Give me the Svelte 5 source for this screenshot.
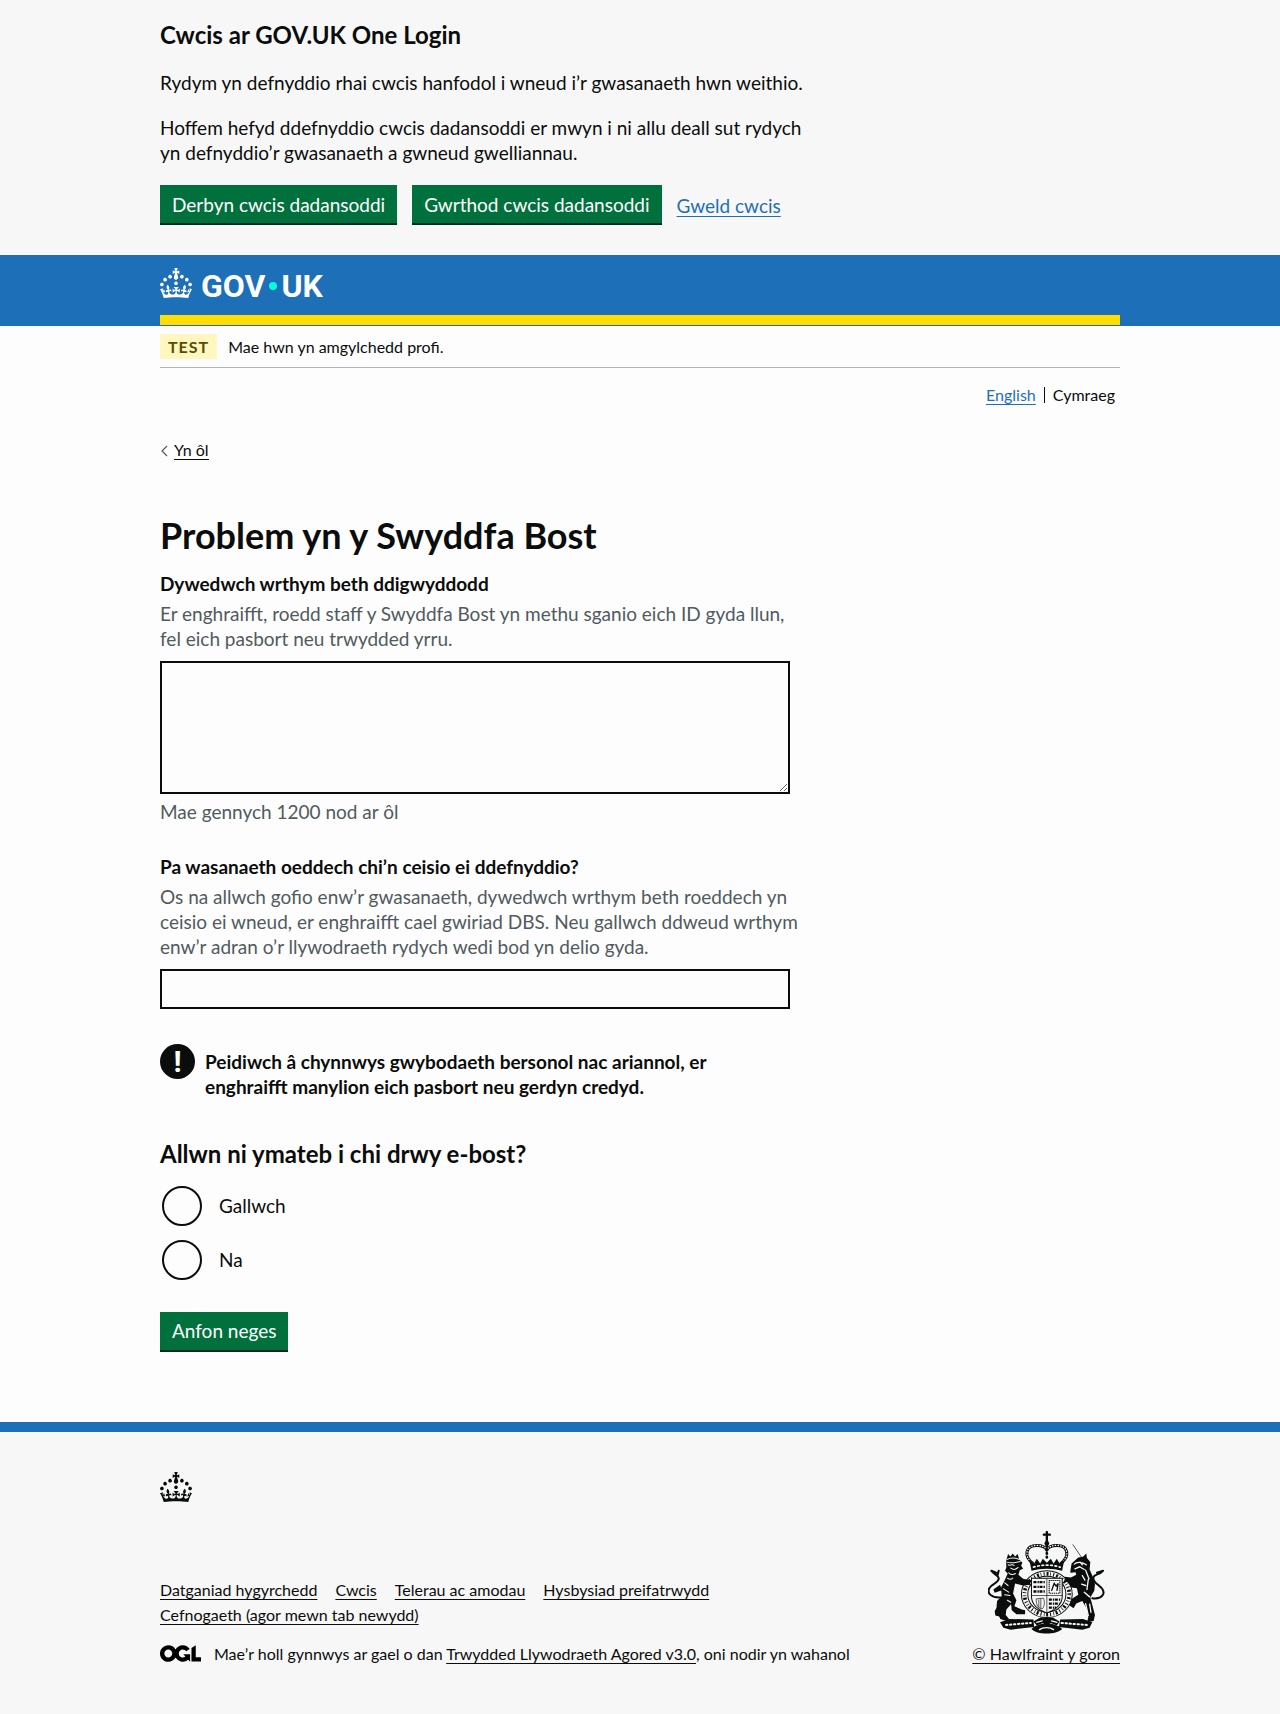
<script>
  const limit = 1200;
  const options = ['Gallwch', 'Na'];
  const footerLinks = [
    'Datganiad hygyrchedd',
    'Cwcis',
    'Telerau ac amodau',
    'Hysbysiad preifatrwydd',
    'Cefnogaeth (agor mewn tab newydd)'
  ];
  let message = $state('');
  let service = $state('');
  let reply = $state('');
  let remaining = $derived(limit - message.length);
</script>

{#snippet crown()}
  <svg class="crown" viewBox="0 0 32 30" aria-hidden="true">
    <path fill="currentColor" d="M22.6 10.4c-1 .4-2-.1-2.4-1-.4-.9.1-2 1-2.4.9-.4 2 .1 2.4 1s-.1 2-1 2.4m-5.9 6.7c-.9.4-2-.1-2.4-1-.4-.9.1-2 1-2.4.9-.4 2 .1 2.4 1s-.1 2-1 2.4m10.8-3.7c-1 .4-2-.1-2.4-1-.4-.9.1-2 1-2.4.9-.4 2 .1 2.4 1s0 2-1 2.4m3.3 4.8c-1 .4-2-.1-2.4-1-.4-.9.1-2 1-2.4.9-.4 2 .1 2.4 1s-.1 2-1 2.4M17 4.7l2.3 1.2V2.5l-2.3.7-.2-.2.9-3h-3.4l.9 3-.2.2c-.1.1-2.3-.7-2.3-.7v3.4L15 4.7c.1.1.1.2.2.2l-1.3 4c-.1.2-.1.4-.1.6 0 1.1.8 2 1.9 2.2h.7c1-.2 1.9-1.1 1.9-2.1 0-.2 0-.4-.1-.6l-1.3-4c-.1-.2 0-.2.1-.3m-7.6 5.7c.9.4 2-.1 2.4-1 .4-.9-.1-2-1-2.4-.9-.4-2 .1-2.4 1s0 2 1 2.4m-5 3c.9.4 2-.1 2.4-1 .4-.9-.1-2-1-2.4-.9-.4-2 .1-2.4 1s.1 2 1 2.4m-3.2 4.8c.9.4 2-.1 2.4-1 .4-.9-.1-2-1-2.4-.9-.4-2 .1-2.4 1s0 2 1 2.4m14.8 11c4.4 0 8.6.3 12.3.8 1.1-4.5 2.4-7 3.7-8.8l-2.5-.9c.2 1.3.3 1.9 0 2.7-.4-.4-.8-1.1-1.1-2.3l-1.2 4c.7-.5 1.3-.8 2-.9-1.1 2.5-2.6 3.1-3.5 3-1.1-.2-1.7-1.2-1.5-2.1.3-1.2 1.5-1.5 2.1-.1 1.1-2.3-.8-3-2-2.3 1.9-1.9 2.1-3.5.6-5.6-2.1 1.6-2.1 3.2-1.2 5.5-1.2-1.4-3.2-.6-2.5 1.6.9-1.4 2.1-.5 1.9.8-.2 1.1-1.7 2.1-3.5 1.9-2.7-.2-2.9-2.1-2.9-3.6.7-.1 1.9.5 2.9 1.9l.4-4.3c-1.1 1.1-2.1 1.4-3.2 1.4.4-1.2 2.1-3 2.1-3h-5.4s1.7 1.9 2.1 3c-1.1 0-2.1-.2-3.2-1.4l.4 4.3c1-1.4 2.2-2 2.9-1.9-.1 1.5-.2 3.4-2.9 3.6-1.9.2-3.4-.8-3.5-1.9-.2-1.3 1-2.2 1.9-.8.7-2.3-1.2-3-2.5-1.6.9-2.2.9-3.9-1.2-5.5-1.5 2-1.3 3.7.6 5.6-1.2-.7-3.1 0-2 2.3.6-1.4 1.8-1.1 2.1.1.2.9-.3 1.9-1.5 2.1-.9.2-2.4-.5-3.5-3 .6 0 1.2.3 2 .9l-1.2-4c-.3 1.1-.7 1.9-1.1 2.3-.3-.8-.2-1.4 0-2.7l-2.9.9C1.3 23 2.6 25.5 3.7 30c3.7-.5 7.9-.8 12.3-.8" />
  </svg>
{/snippet}

<section class="cookies" aria-label="Cwcis ar GOV.UK One Login">
  <div class="container">
    <h2>Cwcis ar GOV.UK One Login</h2>
    <p>Rydym yn defnyddio rhai cwcis hanfodol i wneud i’r gwasanaeth hwn weithio.</p>
    <p>Hoffem hefyd ddefnyddio cwcis dadansoddi er mwyn i ni allu deall sut rydych yn defnyddio’r gwasanaeth a gwneud gwelliannau.</p>
    <div class="actions">
      <button type="button">Derbyn cwcis dadansoddi</button>
      <button type="button">Gwrthod cwcis dadansoddi</button>
      <a class="blue" href="#cwcis">Gweld cwcis</a>
    </div>
  </div>
</section>

<header>
  <div class="container masthead">
    <a class="logo" href="#hafan" aria-label="GOV.UK">
      {@render crown()}
      <span class="wordmark"><span>GOV</span><span class="dot"></span><span>UK</span></span>
    </a>
  </div>
</header>

<div class="container">
  <div class="phase">
    <strong class="tag">TEST</strong>
    <span>Mae hwn yn amgylchedd profi.</span>
  </div>
  <nav class="languages" aria-label="Dewis iaith">
    <a class="blue" href="#en" lang="en">English</a>
    <span class="current">Cymraeg</span>
  </nav>
  <a class="back" href="#yn-ol">
    <svg viewBox="0 0 8 12" aria-hidden="true"><path d="M7 1 2 6l5 5" fill="none" stroke="#505a5f" stroke-width="1.2" /></svg>
    <span>Yn ôl</span>
  </a>

  <main>
    <h1>Problem yn y Swyddfa Bost</h1>
    <form onsubmit={(e) => e.preventDefault()}>
      <div class="group">
        <label class="title" for="message">Dywedwch wrthym beth ddigwyddodd</label>
        <div class="hint" id="message-hint">Er enghraifft, roedd staff y Swyddfa Bost yn methu sganio eich ID gyda llun, fel eich pasbort neu trwydded yrru.</div>
        <textarea id="message" rows="5" aria-describedby="message-hint" bind:value={message}></textarea>
        <div class="count">Mae gennych {remaining} nod ar ôl</div>
      </div>

      <div class="group">
        <label class="title" for="service">Pa wasanaeth oeddech chi’n ceisio ei ddefnyddio?</label>
        <div class="hint wide" id="service-hint">Os na allwch gofio enw’r gwasanaeth, dywedwch wrthym beth roeddech yn ceisio ei wneud, er enghraifft cael gwiriad DBS. Neu gallwch ddweud wrthym enw’r adran o’r llywodraeth rydych wedi bod yn delio gyda.</div>
        <input id="service" class="text" type="text" aria-describedby="service-hint" bind:value={service} />
      </div>

      <div class="warning">
        <span class="mark" aria-hidden="true">!</span>
        <strong>Peidiwch â chynnwys gwybodaeth bersonol nac ariannol, er enghraifft manylion eich pasbort neu gerdyn credyd.</strong>
      </div>

      <fieldset>
        <legend>Allwn ni ymateb i chi drwy e-bost?</legend>
        <div class="radios">
          {#each options as option}
            <div class="radio">
              <input type="radio" id={option} name="reply" value={option} bind:group={reply} />
              <label for={option}>{option}</label>
            </div>
          {/each}
        </div>
      </fieldset>
      <button type="submit">Anfon neges</button>
    </form>
  </main>
</div>

<footer>
  <div class="container">
    {@render crown()}
    <div class="meta">
      <div class="info">
        <ul>
          {#each footerLinks as link}
            <li><a href="#troedyn">{link}</a></li>
          {/each}
        </ul>
        <div class="licence">
          <svg class="ogl" viewBox="0 0 483.2 195.7" aria-hidden="true">
            <path d="M421.5 142.8V.1l-50.7 32.3v161.1h112.4v-50.7zm-122.3-9.6A47.12 47.12 0 0 1 221 97.8c0-26 21.1-47.1 47.1-47.1 16.7 0 31.4 8.7 39.7 21.8l42.7-27.2A97.63 97.63 0 0 0 268.1 0c-36.5 0-68.3 20.1-85.1 49.7A98 98 0 0 0 97.8 0C43.9 0 0 43.9 0 97.8s43.9 97.8 97.8 97.8c36.5 0 68.3-20.1 85.1-49.7a97.76 97.76 0 0 0 149.6 25.4l19.4 22.2h3v-87.8h-80l24.3 27.5zM97.8 145c-26 0-47.1-21.1-47.1-47.1s21.1-47.1 47.1-47.1 47.1 21.1 47.1 47.1S123.8 145 97.8 145" />
          </svg>
          <span>Mae’r holl gynnwys ar gael o dan <a href="#trwydded">Trwydded Llywodraeth Agored v3.0</a>, oni nodir yn wahanol</span>
        </div>
      </div>
      <a class="copyright" href="#hawlfraint">
        <svg class="crest" viewBox="30 33 350 308" aria-hidden="true">
          <g fill="none" stroke="#0b0c0c" stroke-linecap="round" stroke-linejoin="round">
            <!-- crown -->
            <path d="M206 36v26M197 44h18" stroke-width="7" />
            <path d="M164 130c-28-22-22-54 12-54 14 0 26 4 30 14 4-10 16-14 30-14 34 0 40 32 12 54" stroke-width="9" />
            <path d="M164 130c-28-22-22-54 12-54 14 0 26 4 30 14 4-10 16-14 30-14 34 0 40 32 12 54" stroke="#f7f7f7" stroke-width="4" stroke-dasharray="1 7" />
            <path d="M206 66v50" stroke-width="8" stroke-dasharray="2 9" />
            <!-- lion tail -->
            <path d="M68 232c-28 2-42-14-34-28 10-16 30-16 28-30-2-10-14-10-22-22M42 152l14 6M62 152l-4 16" stroke-width="6" />
            <!-- unicorn tail -->
            <path d="M342 234c32 4 40-16 28-30-10-12-30-20-24-34 4-8 18-6 28-18M356 158l18-6" stroke-width="6" />
            <!-- horn -->
            <path d="M310 112 284 74" stroke-width="2" />
            <!-- garter -->
            <ellipse cx="206" cy="222" rx="76" ry="70" stroke-width="3" fill="#f7f7f7" />
            <ellipse cx="206" cy="222" rx="67" ry="61" stroke-width="11" stroke-dasharray="3 6 6 5 2 7" stroke-linecap="butt" />
            <ellipse cx="206" cy="222" rx="57" ry="54" stroke-width="3" />
          </g>
          <g fill="#0b0c0c">
            <circle cx="206" cy="70" r="7" />
            <path d="M160 152c-2-14-4-24-8-34l16 12 8-14 10 14 8-14 12 12 12-12 8 14 10-14 8 14 16-12c-4 10-6 20-8 34-28-8-64-8-92 0z" />
            <!-- lion -->
            <path d="m84 124 6-22 7 7 7-9 7 9 8-7 4 16 10 10-4 8 6 10-10 4-4 14 14 12 20 4 2 14-22 2-24-6-6 30 10 20-6 18 22 10 10 2v12h-26l-14-12-2-18-14 16-2 16 10 12-8 6-18-6-12-26 2-28 14-14-2-26 12-24 8-18-8-8 4-10z" />
            <path d="M66 194 46 208l4 10 22-8zM64 250l-14 22 2 14 18 4-4-18z" />
            <!-- unicorn -->
            <path d="m276 156 4-26 20-18 14-2 10-10 2 14 10 12-2 22 8 18 8 26-2 20-12 20 8 30 6 22-4 18-20 4 4-14-4-26-14-24-18 8-8 14-12-8 6-20 20-12-4-20-16-2-12-16-10-2 2-14 18 2 16-8-2-8-14 2z" />
            <!-- motto ribbon and compartment -->
            <path d="m66 306 28-10 72 2 2 22-70 8-22-6zM342 306l-28-10-68 2-4 22 70 8 22-6z" />
            <path d="M160 326c20-22 70-22 92 0-18 18-76 18-92 0z" />
            <path d="M186 292 166 304l10 12 18-8 12 8 12-8 18 8 8-12-20-12z" />
          </g>
          <g fill="none" stroke="#f7f7f7" stroke-linecap="round">
            <path d="M166 141c26-8 54-8 80 0" stroke-width="5" stroke-dasharray="5 8" />
            <path d="M88 118c8-6 24-6 34 0M86 126c10 4 24 2 40-2M90 134c6 4 10-4 18 2M98 144c8 6 16 4 22-2M92 158c6 6 14 6 20 2M88 174c6 4 12 4 16 0M80 188l10 8M76 206l16 10M80 224l16 2M88 240l10 6M94 268l-8 10" stroke-width="3" />
            <path d="M288 132c8-8 24-6 36 2M290 146l14-6 14 8M306 126l6 8M322 150l10 26M312 166l8 14M330 178l-4 30M318 216l16 14M322 250l8 36M334 252l4 24M310 192l12 4" stroke-width="4" />
            <path d="m84 314 74-6M250 308l76 6" stroke-width="6" stroke-dasharray="4 8" />
            <path d="M176 306l16-4M220 302l16 4M184 328c10-8 32-8 42 0" stroke-width="4" />
          </g>
          <!-- shield -->
          <g fill="none" stroke="#0b0c0c">
            <path d="M160 174h92v54c0 26-24 42-46 50-22-8-46-24-46-50z" fill="#f7f7f7" stroke-width="3" />
            <path d="M206 174v104M160 226h92" stroke-width="2" />
            <path d="M166 186h34M166 200h34M166 214h34M212 238h34M212 250h32M212 262h22" stroke-width="7" stroke-dasharray="9 3 4 2" />
            <path d="M213 181h32v38h-32z" stroke-width="3" stroke-dasharray="4 2" />
            <path d="m220 212 8-22 6 8 6-8-4 22" stroke-width="4" />
            <path d="M174 236c0 22 8 28 18 30 8-8 8-22 4-32zM182 238v24M188 236v28" stroke-width="2" />
          </g>
        </svg>
        <span>© Hawlfraint y goron</span>
      </a>
    </div>
  </div>
</footer>

<style>
  :global(body) {
    background: #fdfdfd;
    color: #0b0c0c;
    font-family: Lato, 'Liberation Sans', sans-serif;
    font-size: 19px;
    line-height: 25px;
  }
  .container {
    box-sizing: border-box;
    max-width: 1020px;
    margin: 0 auto;
    padding: 0 30px;
  }
  h1, h2, p, ul, fieldset { margin: 0; padding: 0; }
  a {
    color: inherit;
    text-decoration-thickness: 1px;
    text-underline-offset: 3px;
  }
  .blue { color: #1d70b8; }
  button {
    height: 40px;
    padding: 0 12px;
    border: 0;
    border-bottom: 2px solid #002d18;
    background: #00703c;
    color: #fff;
    font: inherit;
    cursor: pointer;
  }

  .cookies {
    padding: 20px 0 30px;
    background: #f7f7f7;
  }
  .cookies h2 { font-size: 24px; line-height: 30px; }
  .cookies p { max-width: 645px; margin-top: 20px; }
  .actions {
    display: flex;
    flex-wrap: wrap;
    align-items: center;
    gap: 15px;
    margin-top: 20px;
  }

  header { padding-bottom: 1px; background: #1d70b8; }
  .masthead { display: grid; }
  .logo {
    display: flex;
    align-items: center;
    gap: 9px;
    height: 56px;
    padding-bottom: 4px;
    border-bottom: 10px solid #fd0;
    color: #fff;
    text-decoration: none;
  }
  .crown { display: block; width: 32px; height: 30px; }
  .wordmark {
    display: flex;
    align-items: center;
    gap: 4px;
    padding-top: 6px;
    font: bold 32px/30px Roboto, 'Liberation Sans', sans-serif;
  }
  .dot {
    width: 8px;
    height: 8px;
    border-radius: 50%;
    background: #00ffe0;
  }

  .phase {
    display: flex;
    align-items: center;
    gap: 11px;
    padding: 8px 0;
    border-bottom: 1px solid #b1b4b6;
    font-size: 16px;
  }
  .tag {
    padding: 0 8px;
    background: #fff7bf;
    color: #594d00;
    letter-spacing: 1px;
  }
  .languages {
    display: flex;
    justify-content: flex-end;
    align-items: center;
    gap: 8px;
    padding: 17px 5px 0 0;
    font-size: 16px;
    line-height: 20px;
  }
  .current {
    padding-left: 8px;
    border-left: 1px solid #0b0c0c;
    line-height: 16px;
  }
  .back {
    display: inline-flex;
    align-items: center;
    gap: 6px;
    margin-top: 36px;
    font-size: 16px;
    line-height: 20px;
    text-decoration: none;
  }
  .back span { border-bottom: 1px solid; line-height: 18px; }
  .back svg { width: 8px; height: 12px; }

  main { max-width: 645px; padding: 53px 0 70px; }
  h1 { margin-bottom: 16px; font-size: 36px; line-height: 40px; }
  .group { margin-bottom: 30px; }
  .title { display: block; margin-bottom: 5px; font-weight: bold; }
  .hint { max-width: 630px; margin-bottom: 10px; color: #505a5f; }
  .wide { max-width: 645px; }
  .count { margin-top: 5px; color: #505a5f; }
  textarea, .text {
    display: block;
    box-sizing: border-box;
    width: 100%;
    max-width: 630px;
    padding: 5px;
    border: 2px solid #0b0c0c;
    border-radius: 0;
    background: transparent;
    font: inherit;
  }
  textarea { height: 133px; resize: vertical; }
  .text { height: 40px; }

  .warning {
    display: flex;
    gap: 10px;
    max-width: 560px;
    margin: 35px 0 40px;
  }
  .warning strong { padding-top: 5px; }
  .mark {
    flex: none;
    width: 35px;
    height: 35px;
    border-radius: 50%;
    background: #0b0c0c;
    color: #fff;
    font-family: Roboto, 'Liberation Sans', sans-serif;
    font-size: 30px;
    font-weight: bold;
    line-height: 35px;
    text-align: center;
  }

  fieldset { min-width: 0; margin-bottom: 30px; border: 0; }
  legend {
    padding: 0;
    margin-bottom: 15px;
    font-size: 24px;
    font-weight: bold;
    line-height: 30px;
  }
  .radios { display: grid; gap: 10px; }
  .radio { display: flex; align-items: center; height: 44px; }
  .radio input {
    appearance: none;
    width: 40px;
    height: 40px;
    margin: 0 2px;
    border: 2px solid #0b0c0c;
    border-radius: 50%;
  }
  .radio input:checked { background: radial-gradient(#0b0c0c 10px, transparent 11px); }
  .radio label { padding: 7px 15px; }

  footer {
    padding: 40px 0 50px;
    border-top: 10px solid #1d70b8;
    background: #f7f7f7;
    font-size: 16px;
  }
  .meta {
    display: flex;
    justify-content: space-between;
    align-items: flex-end;
    gap: 30px;
    margin-top: 29px;
  }
  ul {
    display: flex;
    flex-wrap: wrap;
    max-width: 600px;
    column-gap: 18px;
    list-style: none;
  }
  .licence {
    display: flex;
    align-items: center;
    gap: 13px;
    margin-top: 17px;
    line-height: 20px;
  }
  .ogl { flex: none; width: 41px; height: 17px; }
  .copyright {
    display: grid;
    justify-items: center;
    row-gap: 10px;
    line-height: 20px;
  }
  .crest { width: 117px; height: 103px; }
</style>
